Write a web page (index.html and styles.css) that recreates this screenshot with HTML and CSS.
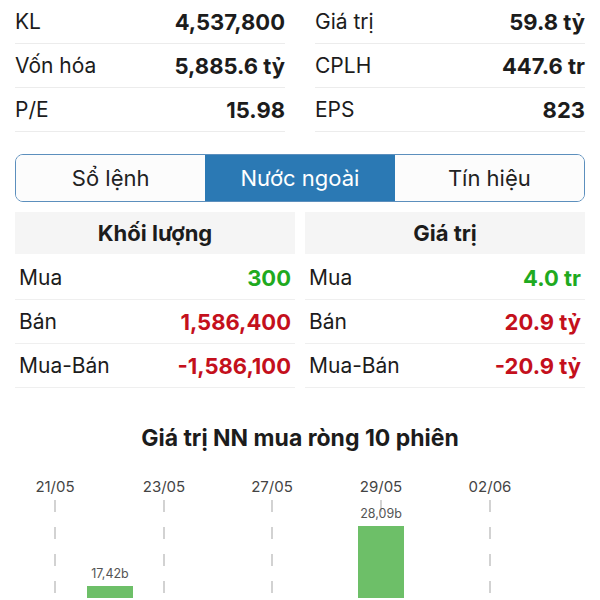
FILE: index.html
```html
<!DOCTYPE html>
<html lang="vi">
<head>
    <meta charset="UTF-8">
    <meta name="viewport" content="width=device-width, initial-scale=1.0">
    <title>Nước ngoài</title>
    <link rel="stylesheet" href="styles.css">
</head>
<body>
    <div class="summary">
        <div class="stat-col">
            <div class="stat-row"><span>KL</span><b>4,537,800</b></div>
            <div class="stat-row"><span>Vốn hóa</span><b>5,885.6 tỷ</b></div>
            <div class="stat-row"><span>P/E</span><b>15.98</b></div>
        </div>
        <div class="stat-col">
            <div class="stat-row"><span>Giá trị</span><b>59.8 tỷ</b></div>
            <div class="stat-row"><span>CPLH</span><b>447.6 tr</b></div>
            <div class="stat-row"><span>EPS</span><b>823</b></div>
        </div>
    </div>

    <div class="tabs">
        <div class="tab">Sổ lệnh</div>
        <div class="tab active">Nước ngoài</div>
        <div class="tab">Tín hiệu</div>
    </div>

    <div class="foreign">
        <div class="foreign-col">
            <div class="foreign-head">Khối lượng</div>
            <div class="foreign-row"><span>Mua</span><b class="up">300</b></div>
            <div class="foreign-row"><span>Bán</span><b class="down">1,586,400</b></div>
            <div class="foreign-row"><span>Mua-Bán</span><b class="down">-1,586,100</b></div>
        </div>
        <div class="foreign-col">
            <div class="foreign-head">Giá trị</div>
            <div class="foreign-row"><span>Mua</span><b class="up">4.0 tr</b></div>
            <div class="foreign-row"><span>Bán</span><b class="down">20.9 tỷ</b></div>
            <div class="foreign-row"><span>Mua-Bán</span><b class="down">-20.9 tỷ</b></div>
        </div>
    </div>

    <h2 class="chart-title">Giá trị NN mua ròng 10 phiên</h2>
    <svg class="chart" width="600" height="140" viewBox="0 0 600 140">
        <g class="dates">
            <text x="55" y="34">21/05</text>
            <text x="164" y="34">23/05</text>
            <text x="272" y="34">27/05</text>
            <text x="381" y="34">29/05</text>
            <text x="490" y="34">02/06</text>
        </g>
        <g class="grid">
            <line x1="55" y1="42" x2="55" y2="140"/>
            <line x1="164" y1="42" x2="164" y2="140"/>
            <line x1="272" y1="42" x2="272" y2="140"/>
            <line x1="381" y1="42" x2="381" y2="140"/>
            <line x1="490" y1="42" x2="490" y2="140"/>
        </g>
        <rect class="bar" x="87" y="128" width="46" height="20"/>
        <text class="bar-label" x="110" y="120">17,42b</text>
        <rect class="bar" x="358" y="68" width="46" height="80"/>
        <text class="bar-label" x="381" y="60">28,09b</text>
    </svg>
</body>
</html>
```

FILE: styles.css
```css
body {
    font-family: 'Inter', 'Liberation Sans', sans-serif;
    background-color: #fff;
    color: #1c1c1c;
    margin: 0;
    padding: 0;
    overflow: hidden;
}
.summary {
    display: grid;
    grid-template-columns: 1fr 1fr;
    gap: 30px;
    padding: 0 15px;
}
.stat-row {
    display: flex;
    justify-content: space-between;
    align-items: center;
    height: 43px;
    border-bottom: 1px solid #ececec;
    font-size: 21px;
}
.stat-row b {
    font-weight: 700;
    font-size: 22px;
}
.tabs {
    display: grid;
    grid-template-columns: repeat(3, 1fr);
    margin: 22px 15px 0;
    height: 46px;
    border: 1.5px solid #5c8fbd;
    border-radius: 8px;
    overflow: hidden;
}
.tab {
    display: flex;
    align-items: center;
    justify-content: center;
    font-size: 22px;
    color: #222;
    background-color: #fcfcfc;
}
.tab.active {
    background-color: #2b79b4;
    color: #fff;
}
.foreign {
    display: grid;
    grid-template-columns: 1fr 1fr;
    gap: 10px;
    padding: 0 15px;
    margin-top: 10px;
}
.foreign-head {
    height: 42px;
    display: flex;
    align-items: center;
    justify-content: center;
    background-color: #f5f5f5;
    font-size: 22px;
    font-weight: 700;
    margin-bottom: 2px;
}
.foreign-row {
    display: flex;
    justify-content: space-between;
    align-items: center;
    height: 43px;
    padding: 0 4px;
    border-bottom: 1px solid #efefef;
    font-size: 21px;
}
.foreign-row b {
    font-weight: 700;
    font-size: 22px;
}
.up {
    color: #1faa1f;
}
.down {
    color: #c4101c;
}
.chart-title {
    text-align: center;
    font-size: 23px;
    font-weight: 700;
    margin: 36px 0 0;
    height: 34px;
}
.chart {
    display: block;
}
.dates text {
    font-family: 'Inter', 'Liberation Sans', sans-serif;
    font-size: 15px;
    fill: #444;
    text-anchor: middle;
}
.grid line {
    stroke: #b5b5b5;
    stroke-width: 1.2;
    stroke-dasharray: 12 15;
}
.bar {
    fill: #6dbf68;
}
.bar-label {
    font-family: 'Inter', 'Liberation Sans', sans-serif;
    font-size: 12.5px;
    fill: #555;
    text-anchor: middle;
}
```
